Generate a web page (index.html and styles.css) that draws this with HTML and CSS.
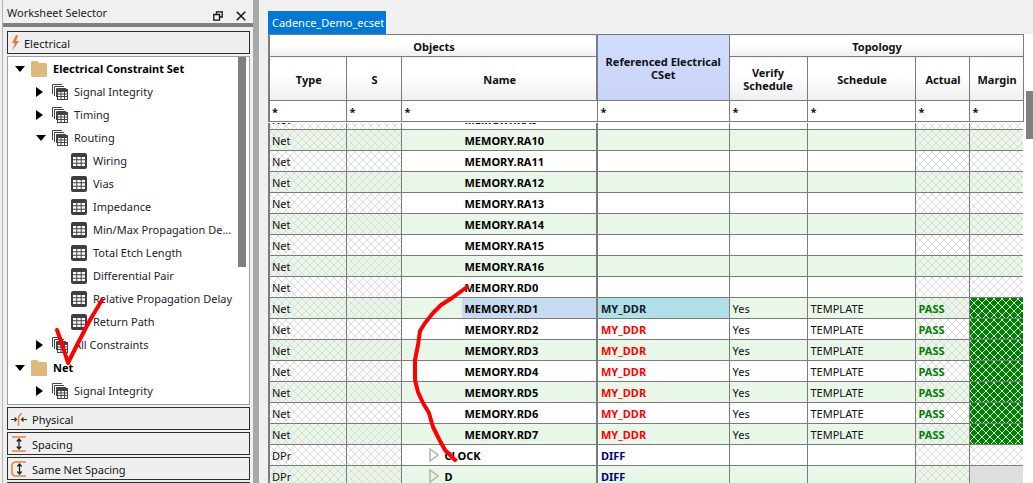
FILE: index.html
```html
<!DOCTYPE html>
<html lang="en">
<head>
<meta charset="utf-8">
<title>Worksheet Selector</title>
<link rel="stylesheet" href="styles.css">
</head>
<body>
<svg class="defs" width="0" height="0" aria-hidden="true">
  <defs>
    <symbol id="folder" viewBox="0 0 16 16"><path d="M1 0h5l2 2h6.500a1.500 1.500 0 0 1 1.500 1.500v11a1.500 1.500 0 0 1-1.500 1.500h-13a1.500 1.500 0 0 1-1.500-1.500v-13a1.500 1.500 0 0 1 1-1.500z" fill="#dfb97c"/></symbol>
    <symbol id="grid" viewBox="0 0 16 16"><rect width="16" height="16" rx="2" fill="#3f3f3f"/><path d="M2 4h3.300v2.300H2zM6.300 4h3.400v2.300H6.300zM10.700 4H14v2.300h-3.300zM2 7.300h3.300v2.400H2zM6.300 7.300h3.400v2.400H6.300zM10.700 7.300H14v2.400h-3.300zM2 10.700h3.300V13H2zM6.300 10.700h3.400V13H6.300zM10.700 10.700H14V13h-3.300z" fill="#fff"/></symbol>
    <symbol id="stack" viewBox="0 0 16 16"><path d="M.5 10V.5H10M2.500 12V2.500H12M4.500 13V4.500H14" fill="none" stroke="#444" stroke-width="1"/><rect x="5" y="5" width="11" height="11" fill="#444"/><path d="M6 8h2.500v1.500H6zM9.500 8H12v1.500H9.500zM13 8h2v1.500h-2zM6 10.500h2.500V12H6zM9.500 10.500H12V12H9.500zM13 10.500h2V12h-2zM6 13h2.500v2H6zM9.500 13H12v2H9.500zM13 13h2v2h-2z" fill="#fff"/></symbol>
  </defs>
</svg>
<div class="app">
  <aside class="sidebar">
    <div class="title">
      <span class="title-text">Worksheet Selector</span>
      <svg class="restore" width="10" height="10" viewBox="0 0 10 10"><path d="M3.500 2.500V.8h5.700v5.200H7M.8 3.500h5.700v5.700H.8z" fill="none" stroke="#111" stroke-width="1.300"/></svg>
      <svg class="close" width="10" height="10" viewBox="0 0 10 10"><path d="M.8.800l8.400 8.400M9.200.800L.8 9.200" stroke="#111" stroke-width="1.500"/></svg>
    </div>
    <div class="title-bar"></div>
    <div class="panel">
      <div class="tab-btn">
        <svg class="btn-icon bolt" width="9" height="16" viewBox="3 0 9 16"><path d="M8 0L4 8h3l-3 8 7-10H8l2-6z" fill="#e07f2e"/></svg>
        <span>Electrical</span>
      </div>
      <div class="tree">
        <div class="scroll"></div>
        <div class="row lv0"><span class="arr down"></span><svg class="ic"><use href="#folder"/></svg><b>Electrical Constraint Set</b></div>
        <div class="row lv1"><span class="arr right"></span><svg class="ic"><use href="#stack"/></svg><span>Signal Integrity</span></div>
        <div class="row lv1"><span class="arr right"></span><svg class="ic"><use href="#stack"/></svg><span>Timing</span></div>
        <div class="row lv1"><span class="arr down"></span><svg class="ic"><use href="#stack"/></svg><span>Routing</span></div>
        <div class="row lv2"><svg class="ic"><use href="#grid"/></svg><span>Wiring</span></div>
        <div class="row lv2"><svg class="ic"><use href="#grid"/></svg><span>Vias</span></div>
        <div class="row lv2"><svg class="ic"><use href="#grid"/></svg><span>Impedance</span></div>
        <div class="row lv2"><svg class="ic"><use href="#grid"/></svg><span>Min/Max Propagation De...</span></div>
        <div class="row lv2"><svg class="ic"><use href="#grid"/></svg><span>Total Etch Length</span></div>
        <div class="row lv2"><svg class="ic"><use href="#grid"/></svg><span>Differential Pair</span></div>
        <div class="row lv2"><svg class="ic"><use href="#grid"/></svg><span>Relative Propagation Delay</span></div>
        <div class="row lv2"><svg class="ic"><use href="#grid"/></svg><span>Return Path</span></div>
        <div class="row lv1"><span class="arr right"></span><svg class="ic"><use href="#stack"/></svg><span>All Constraints</span></div>
        <div class="row lv0"><span class="arr down"></span><svg class="ic"><use href="#folder"/></svg><b>Net</b></div>
        <div class="row lv1"><span class="arr right"></span><svg class="ic"><use href="#stack"/></svg><span>Signal Integrity</span></div>
      </div>
      <div class="tab-btn">
        <svg class="btn-icon" width="16" height="16" viewBox="0 0 16 16"><path d="M0 8.500h5M3.500 6.500l2 2-2 2M16 8.500h-5M12.500 6.500l-2 2 2 2" fill="none" stroke="#333" stroke-width="1.200"/><path d="M7.500 15V7c0-2 2-3 3-5" fill="none" stroke="#e08a3c" stroke-width="1.600"/></svg>
        <span>Physical</span>
      </div>
      <div class="tab-btn">
        <svg class="btn-icon" width="16" height="16" viewBox="0 0 16 16"><path d="M1 1h14M1 15h14" stroke="#e08a3c" stroke-width="1.600"/><path d="M8 3v10M5.800 5.500L8 3l2.200 2.500M5.800 10.500L8 13l2.200-2.500" fill="none" stroke="#222" stroke-width="1.300"/></svg>
        <span>Spacing</span>
      </div>
      <div class="tab-btn">
        <svg class="btn-icon" width="16" height="16" viewBox="0 0 16 16"><path d="M15 1H5Q1 1 1 5v6q0 4 4 4h10" fill="none" stroke="#e08a3c" stroke-width="1.600"/><path d="M8.500 3v10M6.300 5.500L8.500 3l2.200 2.500M6.300 10.500L8.500 13l2.200-2.500" fill="none" stroke="#222" stroke-width="1.300"/></svg>
        <span>Same Net Spacing</span>
      </div>
      <div class="tab-btn"></div>
    </div>
  </aside>
  <div class="splitter"></div>
  <main class="main">
    <div class="tabs"><span class="doc-tab">Cadence_Demo_ecset</span></div>
    <div class="sheet">
      <div class="grid-wrap">
        <table class="grid head">
          <colgroup><col class="c1"><col class="c2"><col class="c3"><col class="c4"><col class="c5"><col class="c6"><col class="c7"><col class="c8"></colgroup>
          <tr class="h1"><th colspan="3" class="one">Objects</th><th rowspan="2" class="refh">Referenced Electrical<br>CSet</th><th colspan="4" class="one">Topology</th></tr>
          <tr class="h2"><th class="one">Type</th><th class="one">S</th><th class="one">Name</th><th>Verify<br>Schedule</th><th class="one">Schedule</th><th class="one">Actual</th><th class="one">Margin</th></tr>
          <tr class="filter"><td>*</td><td>*</td><td>*</td><td>*</td><td>*</td><td>*</td><td>*</td><td>*</td></tr>
        </table>
        <div class="body-clip">
          <table class="grid body">
            <colgroup><col class="c1"><col class="c2"><col class="c3"><col class="c4"><col class="c5"><col class="c6"><col class="c7"><col class="c8"></colgroup>
            <tr><td class="ht">Net</td><td class="ht"></td><td><div class="nm">MEMORY.RA9</div></td><td></td><td></td><td></td><td class="ht"></td><td class="ht"></td></tr>
            <tr class="g"><td class="ht">Net</td><td class="ht"></td><td><div class="nm">MEMORY.RA10</div></td><td></td><td></td><td></td><td class="ht"></td><td class="ht"></td></tr>
            <tr><td class="ht">Net</td><td class="ht"></td><td><div class="nm">MEMORY.RA11</div></td><td></td><td></td><td></td><td class="ht"></td><td class="ht"></td></tr>
            <tr class="g"><td class="ht">Net</td><td class="ht"></td><td><div class="nm">MEMORY.RA12</div></td><td></td><td></td><td></td><td class="ht"></td><td class="ht"></td></tr>
            <tr><td class="ht">Net</td><td class="ht"></td><td><div class="nm">MEMORY.RA13</div></td><td></td><td></td><td></td><td class="ht"></td><td class="ht"></td></tr>
            <tr class="g"><td class="ht">Net</td><td class="ht"></td><td><div class="nm">MEMORY.RA14</div></td><td></td><td></td><td></td><td class="ht"></td><td class="ht"></td></tr>
            <tr><td class="ht">Net</td><td class="ht"></td><td><div class="nm">MEMORY.RA15</div></td><td></td><td></td><td></td><td class="ht"></td><td class="ht"></td></tr>
            <tr class="g"><td class="ht">Net</td><td class="ht"></td><td><div class="nm">MEMORY.RA16</div></td><td></td><td></td><td></td><td class="ht"></td><td class="ht"></td></tr>
            <tr><td class="ht">Net</td><td class="ht"></td><td><div class="nm">MEMORY.RD0</div></td><td></td><td></td><td></td><td class="ht"></td><td class="ht"></td></tr>
            <tr class="g"><td class="ht">Net</td><td class="ht"></td><td><div class="nm sel">MEMORY.RD1</div></td><td class="selref">MY_DDR</td><td>Yes</td><td>TEMPLATE</td><td class="ht pass">PASS</td><td class="okm"></td></tr>
            <tr><td class="ht">Net</td><td class="ht"></td><td><div class="nm">MEMORY.RD2</div></td><td class="red">MY_DDR</td><td>Yes</td><td>TEMPLATE</td><td class="ht pass">PASS</td><td class="okm"></td></tr>
            <tr class="g"><td class="ht">Net</td><td class="ht"></td><td><div class="nm">MEMORY.RD3</div></td><td class="red">MY_DDR</td><td>Yes</td><td>TEMPLATE</td><td class="ht pass">PASS</td><td class="okm"></td></tr>
            <tr><td class="ht">Net</td><td class="ht"></td><td><div class="nm">MEMORY.RD4</div></td><td class="red">MY_DDR</td><td>Yes</td><td>TEMPLATE</td><td class="ht pass">PASS</td><td class="okm"></td></tr>
            <tr class="g"><td class="ht">Net</td><td class="ht"></td><td><div class="nm">MEMORY.RD5</div></td><td class="red">MY_DDR</td><td>Yes</td><td>TEMPLATE</td><td class="ht pass">PASS</td><td class="okm"></td></tr>
            <tr><td class="ht">Net</td><td class="ht"></td><td><div class="nm">MEMORY.RD6</div></td><td class="red">MY_DDR</td><td>Yes</td><td>TEMPLATE</td><td class="ht pass">PASS</td><td class="okm"></td></tr>
            <tr class="g"><td class="ht">Net</td><td class="ht"></td><td><div class="nm">MEMORY.RD7</div></td><td class="red">MY_DDR</td><td>Yes</td><td>TEMPLATE</td><td class="ht pass">PASS</td><td class="okm"></td></tr>
            <tr><td class="ht">DPr</td><td class="ht"></td><td><div class="nm grp"><svg class="tri" width="10" height="14" viewBox="0 0 10 14"><path d="M1 1l8 6-8 6z" fill="#fff" stroke="#b4b4b4" stroke-width="1.500"/></svg>CLOCK</div></td><td class="blue">DIFF</td><td></td><td></td><td class="ht"></td><td class="ht"></td></tr>
            <tr class="g"><td class="ht">DPr</td><td class="ht"></td><td><div class="nm grp"><svg class="tri" width="10" height="14" viewBox="0 0 10 14"><path d="M1 1l8 6-8 6z" fill="#e8f7e7" stroke="#b4b4b4" stroke-width="1.500"/></svg>D</div></td><td class="blue">DIFF</td><td></td><td></td><td class="ht"></td><td class="na"></td></tr>
          </table>
        </div>
      </div>
      <div class="vscroll"><div class="thumb"></div></div>
    </div>
  </main>
</div>
<svg class="ink" width="1033" height="483" viewBox="0 0 1033 483" aria-hidden="true">
  <path d="M57 330L61 341L68 363L77 345L90 320L102 300" fill="none" stroke="#f00" stroke-width="4" stroke-linejoin="round" stroke-linecap="round"/>
  <path d="M467 287L452 298L441 305L433 313L425 323L420 331L418 345L415 360L415 380L418 392L423 403L429 413L433 427L439 439L445 450L455 460" fill="none" stroke="#f00" stroke-width="4" stroke-linejoin="round" stroke-linecap="round"/>
</svg>
</body>
</html>
```
FILE: styles.css
```css
html, body {
  margin: 0;
  padding: 0;
  height: 100%;
  overflow: hidden;
}
body {
  font-family: "Noto Sans", "Open Sans", sans-serif;
  font-size: 11px;
  color: #111;
  background: #f0f0f0;
  position: relative;
}
.defs { position: absolute; }
.app {
  display: flex;
  height: 483px;
}

/* Left pane */
.sidebar {
  width: 250px;
  margin-left: 2px;
  padding-top: 2px;
  border-left: 1px solid #b4b4b4;
  display: flex;
  flex-direction: column;
  background: #f0f0f0;
  overflow: hidden;
  flex: none;
}
.title {
  height: 21px;
  flex: none;
  display: flex;
  align-items: center;
  padding: 0 7px 0 4px;
  color: #1a1a1a;
}
.title-text { flex: 1; }
.restore { margin-right: 13px; margin-top: 7px; }
.close { margin-top: 6px; }
.title-bar {
  height: 4px;
  flex: none;
  background: #808080;
}
.panel {
  padding: 4px 3px 0 4px;
  display: flex;
  flex-direction: column;
  gap: 2px;
  flex: none;
}
.tab-btn {
  height: 20px;
  flex: none;
  border: 1px solid #2e2e2e;
  background: #efefef;
  display: flex;
  align-items: center;
  gap: 5px;
  padding: 1px 0 0 3px;
  color: #151515;
}
.btn-icon { flex: none; }
.bolt { margin-right: -1px; }
.tree {
  height: 347px;
  flex: none;
  border: 1px solid #a0a0a0;
  background: #fff;
  position: relative;
  overflow: hidden;
}
.scroll {
  position: absolute;
  left: 230px;
  top: 0;
  width: 8px;
  height: 210px;
  background: #808080;
}
.row {
  height: 23px;
  display: flex;
  align-items: center;
  white-space: nowrap;
  color: #1c1c2e;
}
.row b { color: #000; }
.lv0 { padding-left: 7px; }
.lv1 { padding-left: 28px; }
.lv2 { padding-left: 63px; }
.arr {
  width: 0;
  height: 0;
  flex: none;
}
.arr.down {
  border-left: 5px solid transparent;
  border-right: 5px solid transparent;
  border-top: 6px solid #000;
  margin-right: 6px;
}
.arr.right {
  border-top: 5px solid transparent;
  border-bottom: 5px solid transparent;
  border-left: 7px solid #000;
  margin-right: 9px;
}
.ic {
  width: 16px;
  height: 16px;
  flex: none;
  margin-right: 6px;
}

.splitter {
  width: 6px;
  background: #a8a8a8;
  flex: none;
}

/* Right pane */
.main {
  flex: 1;
  min-width: 0;
  display: flex;
  flex-direction: column;
}
.tabs {
  height: 23px;
  margin-top: 11px;
  padding-left: 9px;
  flex: none;
  display: flex;
}
.doc-tab {
  background: #0078d7;
  color: #fff;
  padding: 0 4px;
  width: 110px;
  line-height: 23px;
  white-space: nowrap;
}
.sheet {
  flex: 1;
  min-height: 0;
  background: #fff;
  display: flex;
  margin-left: 9px;
  position: relative;
}
.grid-wrap {
  width: 755px;
  flex: none;
  background: #fff;
}
.grid {
  table-layout: fixed;
  border-collapse: collapse;
  width: 755px;
}
.c1 { width: 77px; }
.c2 { width: 55px; }
.c3 { width: 196px; }
.c4 { width: 132px; }
.c5 { width: 78px; }
.c6 { width: 108px; }
.c7 { width: 54px; }
.c8 { width: 54px; }
.grid th, .grid td {
  border: 1px solid #7c7c7c;
  padding: 0 1px 0 3px;
  line-height: 13px;
  overflow: hidden;
  white-space: nowrap;
}
.grid td:first-child { padding-left: 2px; }
.grid th {
  font-weight: 700;
  color: #111;
  padding: 0 2px;
  background: linear-gradient(#fff 40%, #efefef);
}
.grid th.one { padding: 1px 1px 0 3px; }
.grid .refh {
  background: linear-gradient(#d2dcfe, #c8d4f6);
  border-left: 2px solid #7c7c8c;
}
.h1 { height: 22px; }
.h2 { height: 44px; }
.filter { height: 21px; }
.filter td {
  font-weight: 700;
  vertical-align: middle;
}
.head { border-left: 2px solid #7c7c7c; }
.body-clip {
  height: 362px;
  margin-top: 1px;
  overflow: hidden;
}
.body {
  margin-top: -15px;
}
.body tr { height: 21px; }
.body td { color: #111; }
.body td:first-child { border-left: 2px solid #7c7c7c; }
.body td:nth-child(4) { border-left: 2px solid #7c7c7c; }
.g { background: #e8f7e7; }
.ht {
  background-image: url("data:image/svg+xml,%3Csvg xmlns='http://www.w3.org/2000/svg' width='8' height='8' shape-rendering='crispEdges'%3E%3Cpath fill='%23dcdcdc' d='M0 0h1v1H0zM1 1h1v1H1zM2 2h1v1H2zM3 3h2v1H3zM3 4h2v1H3zM5 5h1v1H5zM6 6h1v1H6zM7 7h1v1H7zM7 0h1v1H7zM6 1h1v1H6zM5 2h1v1H5zM2 5h1v1H2zM1 6h1v1H1zM0 7h1v1H0z'/%3E%3C/svg%3E");
}
.okm {
  background-color: #008000;
  background-image: url("data:image/svg+xml,%3Csvg xmlns='http://www.w3.org/2000/svg' width='8' height='8' shape-rendering='crispEdges'%3E%3Cpath fill='%23d4e6d4' d='M0 0h1v1H0zM1 1h1v1H1zM2 2h1v1H2zM3 3h2v1H3zM3 4h2v1H3zM5 5h1v1H5zM6 6h1v1H6zM7 7h1v1H7zM7 0h1v1H7zM6 1h1v1H6zM5 2h1v1H5zM2 5h1v1H2zM1 6h1v1H1zM0 7h1v1H0z'/%3E%3C/svg%3E");
}
.na { background: #dedede; }
.nm {
  margin: 0 -1px 0 57px;
  padding-left: 3px;
  height: 20px;
  line-height: 21px;
  font-weight: 700;
  color: #000;
}
.sel { background: #c6daf2; }
.grp {
  margin-left: 24px;
  display: flex;
  align-items: center;
  padding-left: 0;
}
.tri {
  margin-right: 6px;
  flex: none;
}
.red { color: #f00 !important; font-weight: 700; }
.blue { color: #00008b !important; font-weight: 700; }
.selref { background: #b0dfe6; font-weight: 700; color: #10202a !important; }
.pass { color: #008000 !important; font-weight: 700; }
.vscroll {
  flex: 1;
  position: relative;
}
.thumb {
  position: absolute;
  right: 0;
  top: 57px;
  width: 7px;
  height: 48px;
  background: #808080;
}

/* Hand-drawn annotations on top of everything */
.ink {
  position: absolute;
  left: 0;
  top: 0;
  pointer-events: none;
}
```
